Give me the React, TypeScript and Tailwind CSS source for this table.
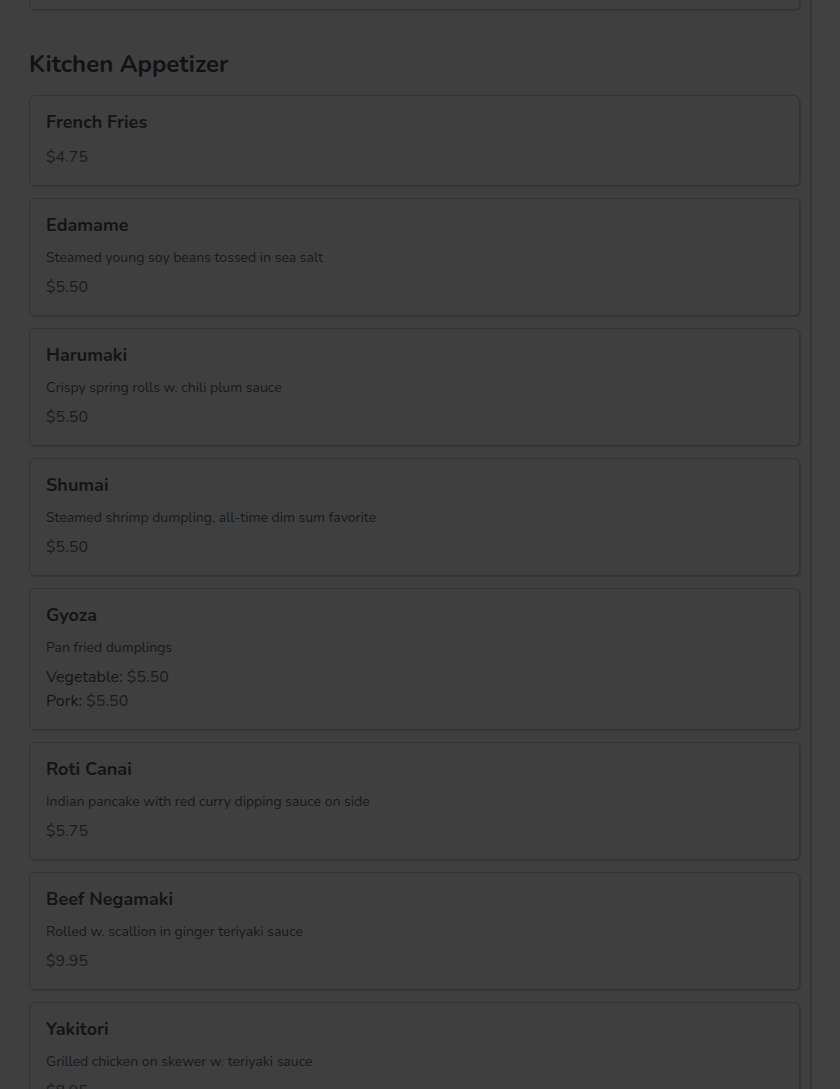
import React from "react";

type Item = {
  name: string;
  desc?: string;
  prices: { label?: string; price: string }[];
};

const items: Item[] = [
  { name: "French Fries", prices: [{ price: "$4.75" }] },
  { name: "Edamame", desc: "Steamed young soy beans tossed in sea salt", prices: [{ price: "$5.50" }] },
  { name: "Harumaki", desc: "Crispy spring rolls w. chili plum sauce", prices: [{ price: "$5.50" }] },
  { name: "Shumai", desc: "Steamed shrimp dumpling, all-time dim sum favorite", prices: [{ price: "$5.50" }] },
  {
    name: "Gyoza",
    desc: "Pan fried dumplings",
    prices: [
      { label: "Vegetable:", price: "$5.50" },
      { label: "Pork:", price: "$5.50" },
    ],
  },
  { name: "Roti Canai", desc: "Indian pancake with red curry dipping sauce on side", prices: [{ price: "$5.75" }] },
  { name: "Beef Negamaki", desc: "Rolled w. scallion in ginger teriyaki sauce", prices: [{ price: "$9.95" }] },
  { name: "Yakitori", desc: "Grilled chicken on skewer w. teriyaki sauce", prices: [{ price: "$8.95" }] },
];

const font = { fontFamily: "Nunito, Lato, 'Noto Sans', sans-serif" };

function Card({ item }: { item: Item }) {
  return (
    <div className="rounded-[6px] border border-[#343434] bg-[#3f3f3f] px-[16px] pt-[15px] pb-[16px] shadow-[1px_1px_1px_rgba(0,0,0,0.15)]">
      <div className="text-[18px] font-bold leading-[22px] text-[#141414]">{item.name}</div>
      {item.desc && (
        <div className="mt-[13px] text-[14px] leading-[18px] text-[#181818]">{item.desc}</div>
      )}
      <div className={item.desc ? "mt-[8px]" : "mt-[12px]"}>
        {item.prices.map((p, i) => (
          <div key={i} className="text-[16px] leading-[24px]">
            {p.label && <span className="text-[#141414]">{p.label} </span>}
            <span className="text-[#1e1b16]">{p.price}</span>
          </div>
        ))}
      </div>
    </div>
  );
}

export default function App() {
  return (
    <div className="flex h-[1089px] w-full overflow-hidden bg-[#3f3f3f]" style={font}>
      <div className="w-[812px] shrink-0 border-r-2 border-[#363636] pl-[29px] pr-[10px]">
        <div className="h-[10px] rounded-b-[6px] border-x border-b border-[#343434] shadow-[1px_1px_1px_rgba(0,0,0,0.15)]" />
        <h2 className="mt-[38px] mb-[15px] text-[24px] font-bold leading-[32px] text-[#121212]">
          Kitchen Appetizer
        </h2>
        <div className="flex flex-col gap-[12px]">
          {items.map((it) => (
            <Card key={it.name} item={it} />
          ))}
        </div>
      </div>
      <div className="flex-1 bg-[#414141]" />
    </div>
  );
}
